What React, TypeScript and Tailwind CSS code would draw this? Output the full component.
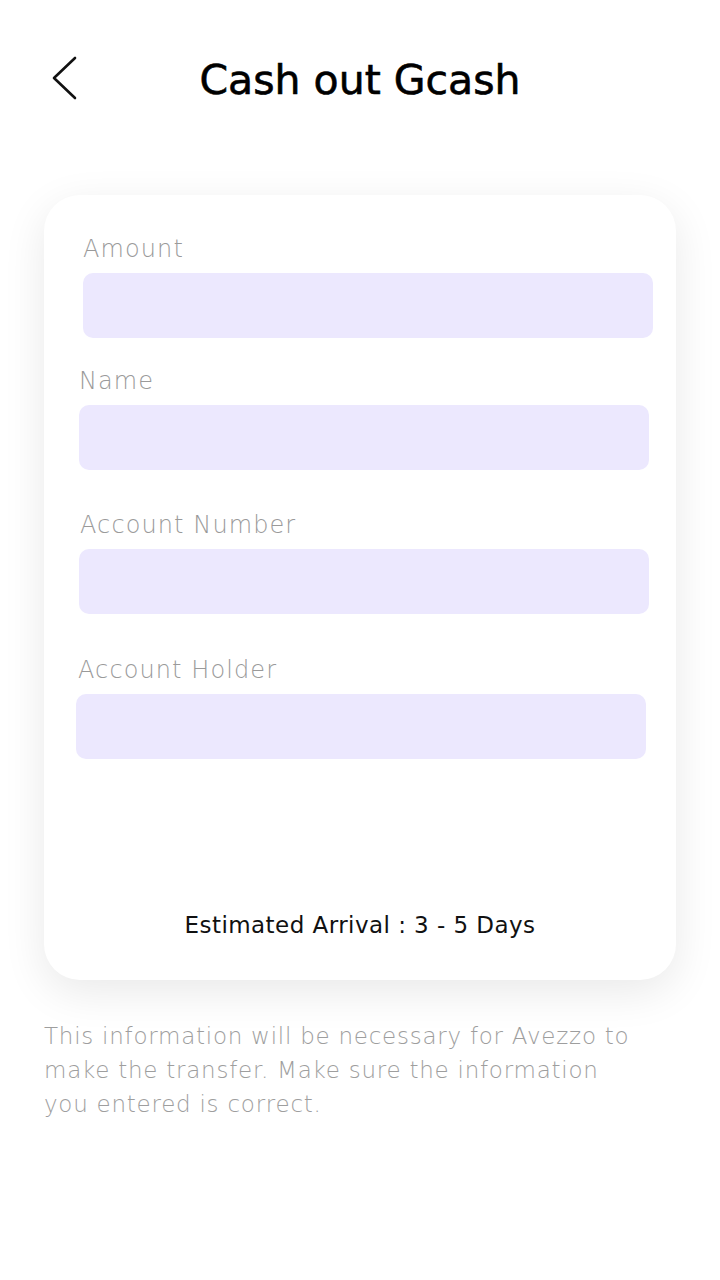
import React from 'react';

const fields = [
  { label: 'Amount', box: 'ml-[39px]', labelPos: 'ml-[39px]' },
  { label: 'Name', box: 'ml-[35px]', labelPos: 'ml-[35px]' },
  { label: 'Account Number', box: 'ml-[35px]', labelPos: 'ml-[36px]' },
  { label: 'Account Holder', box: 'ml-[32px]', labelPos: 'ml-[34px]' },
];

const gaps = ['mt-0', 'mt-[28px]', 'mt-[40px]', 'mt-[41px]'];

const App = () => {
  return (
    <div
      className="w-[720px] h-[1280px] bg-white text-black"
      style={{ fontFamily: '"DejaVu Sans", "Open Sans", sans-serif' }}
    >
      {/* header */}
      <div className="relative h-[160px]">
        <button className="absolute left-[50px] top-[56px] w-[28px] h-[44px] flex items-center justify-center">
          <svg width="28" height="44" viewBox="0 0 28 44" fill="none">
            <path d="M25 2 L4 22 L25 42" stroke="#111" strokeWidth="2.6" strokeLinecap="round" strokeLinejoin="round" />
          </svg>
        </button>
        <h1 className="pt-[52px] text-center text-[41px] leading-[56px] font-normal [-webkit-text-stroke:0.6px_#000]">
          Cash out Gcash
        </h1>
      </div>

      {/* card */}
      <div className="mt-[35px] mx-[44px] w-[632px] rounded-[36px] bg-white shadow-[0_12px_44px_rgba(0,0,0,0.09)] pt-[39px] pb-[40px]">
        {fields.map((f, i) => (
          <div key={f.label} className={gaps[i]}>
            <div className={`${f.labelPos} text-[24px] leading-[30px] font-light tracking-[1.1px] text-[#9a9a9a]`}>
              {f.label}
            </div>
            <div className={`${f.box} mt-[9px] w-[570px] h-[65px] rounded-[10px] bg-[#ece8fe]`} />
          </div>
        ))}
        <div className="mt-[151px] text-center text-[23px] leading-[30px] tracking-[0.45px] text-[#111]">
          Estimated Arrival : 3 - 5 Days
        </div>
      </div>

      {/* note */}
      <p className="mt-[39px] mx-[44px] w-[596px] text-[23px] leading-[34px] font-light tracking-[0.75px] text-[#9e9e9e]">
        This information will be necessary for Avezzo to make the transfer. Make sure the information you entered is correct.
      </p>
    </div>
  );
};

export default App;
